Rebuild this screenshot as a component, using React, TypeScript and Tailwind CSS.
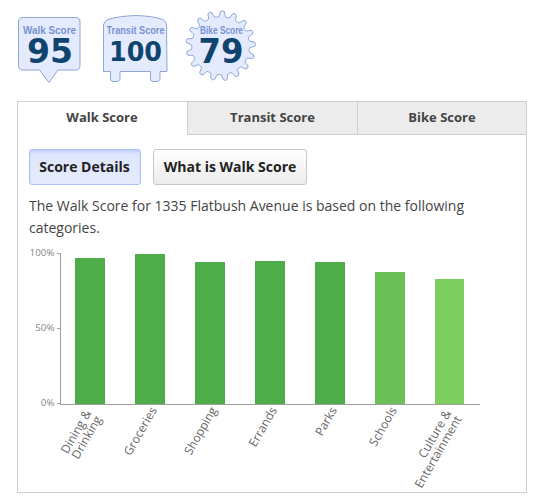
import clsx from 'clsx'

const TABS = ['Walk Score', 'Transit Score', 'Bike Score']

const BARS = [
  { label: ['Dining &', 'Drinking'], height: 146, width: 30, color: '#4eac49' },
  { label: ['Groceries'], height: 150, width: 30, color: '#4eac49' },
  { label: ['Shopping'], height: 142, width: 30, color: '#4eac49' },
  { label: ['Errands'], height: 143, width: 30, color: '#4eac49' },
  { label: ['Parks'], height: 142, width: 30, color: '#4eac49' },
  { label: ['Schools'], height: 132, width: 30, color: '#6bc157' },
  { label: ['Culture &', 'Entertainment'], height: 125, width: 29, color: '#7fce60' },
]

const TEETH = 17

function gearPath(cx: number, cy: number) {
  const step = (Math.PI * 2) / TEETH
  const at = (r: number, a: number) => `${(cx + r * Math.sin(a)).toFixed(2)} ${(cy - r * Math.cos(a)).toFixed(2)}`
  const start = 0.05
  let d = `M${at(28.8, start - step * 0.5)}`
  for (let i = 0; i < TEETH; i++) {
    const a = i * step + start
    d += `Q${at(28.3, a - step * 0.24)} ${at(31.5, a - step * 0.22)}`
    d += `Q${at(35, a - step * 0.22)} ${at(35, a)}`
    d += `Q${at(35, a + step * 0.22)} ${at(31.5, a + step * 0.22)}`
    d += `Q${at(28.3, a + step * 0.24)} ${at(28.8, a + step * 0.5)}`
  }
  return d + 'Z'
}

type BadgeProps = {
  label: string
  score: string
  path: string
  x: number
  y: number
  length: number
  scoreX: number
  scoreY: number
  scoreLength: number
  size: number
}

function Badge({ label, score, path, x, y, length, scoreX, scoreY, scoreLength, size }: BadgeProps) {
  return (
    <svg width="85" height="85" viewBox="0 0 85 85" className="block shrink-0">
      <path d={path} fill="#e5ebff" stroke="#8ea6d8" strokeWidth="1" strokeLinejoin="round" />
      <text x={x} y={y} textLength={length} lengthAdjust="spacingAndGlyphs" fill="#7893cf" fontSize="11.5" fontWeight="700" fontFamily="Liberation Sans, sans-serif">
        {label}
      </text>
      <text x={scoreX} y={scoreY} textLength={scoreLength} lengthAdjust="spacingAndGlyphs" textAnchor="middle" fill="#0f446f" fontSize={size} fontWeight="700" fontFamily="DejaVu Sans, sans-serif">
        {score}
      </text>
    </svg>
  )
}

function Chart() {
  return (
    <svg width="490" height="252" viewBox="18 240 490 252" className="-ml-[11px] block font-['Open_Sans',sans-serif]">
      {BARS.map((bar, i) => (
        <rect key={bar.label[0]} x={75 + i * 60} y={404 - bar.height} width={bar.width} height={bar.height} fill={bar.color} />
      ))}
      <path d="M60.5 253v151M57 253.5h3M57 328.5h3M57 403.5h3M60 404.5h420" fill="none" stroke="#a0a0a0" />
      {['100%', '50%', '0%'].map((tick, i) => (
        <text key={tick} x="54.5" y={256 + i * 75} textAnchor="end" fontSize="9.8" fill="#888">
          {tick}
        </text>
      ))}
      {BARS.map((bar, i) => (
        <g key={bar.label[0]} transform={`translate(${(bar.label.length > 1 ? 91.5 : 97.3) + i * 60} ${bar.label.length > 1 ? 413 : 410}) rotate(-60)`}>
          {bar.label.map((line, n) => (
            <text key={line} x="0" y={n * 12} textAnchor="end" fontSize="12" fill="#666">
              {line}
            </text>
          ))}
        </g>
      ))}
    </svg>
  )
}

export default function App() {
  return (
    <div className="h-[501px] w-[545px] overflow-hidden bg-white pl-[10px] pt-[5px] font-['Open_Sans',sans-serif]">
      <div className="flex h-[96px]">
        <Badge
          label="Walk Score"
          score="95"
          path="M13 12.5H65.5Q70 12.5 70 17V60.5Q70 65 65.5 65H48L39 77.5L29.5 65H13Q8.5 65 8.5 60.5V17Q8.5 12.5 13 12.5Z"
          x={13} y={29} length={53} scoreX={40} scoreY={58} scoreLength={46} size={33}
        />
        <Badge
          label="Transit Score"
          score="100"
          path="M8.5 20Q9 16 13 14.5Q24 11 41 10.5Q58 11 68 14.5Q71 16 71.5 20L72 66.5H65V74Q64.5 76.5 62 76.5H58Q55.5 76.5 55.5 74V66.5H25V74Q24.5 76.5 22 76.5H18Q15.5 76.5 15.5 74V66.5H8.5Z"
          x={11.5} y={29} length={58} scoreX={40.5} scoreY={56} scoreLength={53} size={26}
        />
        {/* sits two pixels closer to the transit badge than the others do */}
        <div className="-ml-0.5">
          <Badge
            label="Bike Score"
            score="79"
            path={gearPath(42.7, 40.7)}
            x={22} y={29} length={43} scoreX={43} scoreY={58} scoreLength={45} size={33}
          />
        </div>
      </div>

      <div className="ml-[7px] h-[392px] w-[510px] border border-[#cfcfcf]">
        <div className="grid h-[33px] grid-cols-[169px_170px_169px] text-[13px] font-bold text-[#444]">
          {TABS.map((tab, i) => (
            <button
              key={tab}
              className={clsx(
                'pb-px text-center',
                i === 0 ? 'pr-px' : 'border-b border-l border-[#cfcfcf] bg-[#ececec]',
              )}
            >
              {tab}
            </button>
          ))}
        </div>

        <div className="pl-[11px] pt-[14px]">
          <div className="flex gap-3 text-sm font-bold text-[#222]">
            <button className="h-9 w-28 rounded-[3px] border border-[#a9c1f8] bg-linear-to-b from-[#d3dffc] via-[#dfe7fc] via-20% to-[#e6ecfd] pr-px shadow-[inset_0_2px_2px_#c2d2fa]">
              Score Details
            </button>
            <button className="h-9 w-[154px] rounded-[3px] border border-[#c8c8c8] bg-linear-to-b from-white to-[#ececec]">
              What is Walk Score
            </button>
          </div>
          <p className="mt-[10px] h-[45px] w-[450px] text-sm leading-[22px] text-[#444]">
            The Walk Score for 1335 Flatbush Avenue is based on the following categories.
          </p>
          <Chart />
        </div>
      </div>
    </div>
  )
}
